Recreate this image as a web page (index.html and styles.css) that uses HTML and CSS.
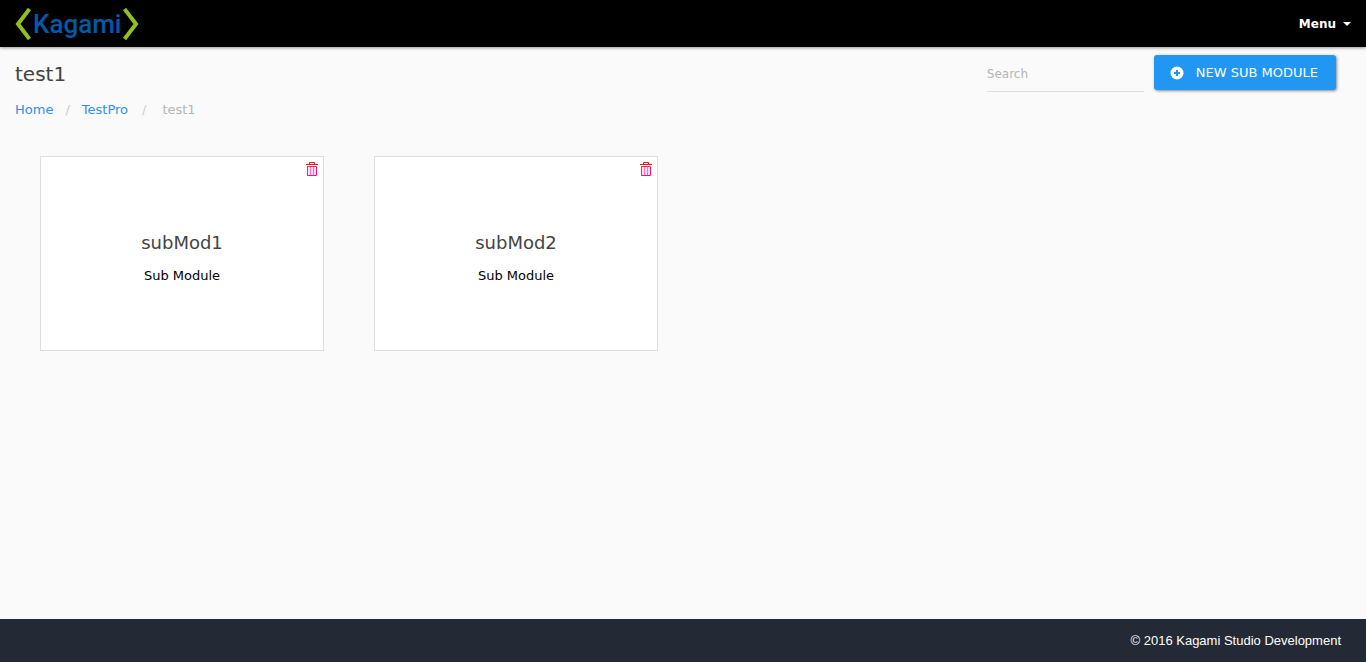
FILE: index.html
```html
<!DOCTYPE html>
<html lang="en">
<head>
<meta charset="utf-8">
<meta name="viewport" content="width=device-width, initial-scale=1">
<title>Kagami Studio</title>
<link rel="stylesheet" href="styles.css">
</head>
<body>
<header class="topbar">
  <a class="brand" href="#" aria-label="Kagami">
    <svg class="bracket" viewBox="0 0 16 32" aria-hidden="true"><path d="M14.500 1 3 16l11.500 15"/></svg>
    <span class="brand-name">Kagami</span>
    <svg class="bracket" viewBox="0 0 16 32" aria-hidden="true"><path d="M1.500 1 13 16 1.500 31"/></svg>
  </a>
  <button class="menu" type="button">Menu<span class="caret"></span></button>
</header>
<main class="page">
  <div class="page-head">
    <div class="titles">
      <h1 class="title">test1</h1>
      <nav aria-label="Breadcrumb">
        <ol class="breadcrumb">
          <li><a href="#">Home</a></li>
          <li><a href="#">TestPro</a></li>
          <li class="current">test1</li>
        </ol>
      </nav>
    </div>
    <div class="actions">
      <input class="search" type="text" placeholder="Search" aria-label="Search">
      <button class="new-button" type="button">
        <svg class="plus" viewBox="0 0 14 14" aria-hidden="true"><circle cx="7" cy="7" r="6.500" fill="#fff"/><path d="M7 4v6M4 7h6" stroke="#2196f3" stroke-width="2"/></svg>
        <span>NEW SUB MODULE</span>
      </button>
    </div>
  </div>
  <div class="cards">
    <article class="card">
      <button class="delete" type="button" aria-label="Delete subMod1">
        <svg class="trash" viewBox="0 0 12 14" aria-hidden="true"><path class="bin" d="M1.500 4.500v9h9v-9z"/><path class="ribs" d="M4.500 5v8M7.500 5v8"/><path class="side" d="M1.500 14V4.500H10"/><path class="lid" d="M0 2.500h12M3.500 2V.5h5V2"/></svg>
      </button>
      <h2 class="card-title">subMod1</h2>
      <p class="card-text">Sub Module</p>
    </article>
    <article class="card">
      <button class="delete" type="button" aria-label="Delete subMod2">
        <svg class="trash" viewBox="0 0 12 14" aria-hidden="true"><path class="bin" d="M1.500 4.500v9h9v-9z"/><path class="ribs" d="M4.500 5v8M7.500 5v8"/><path class="side" d="M1.500 14V4.500H10"/><path class="lid" d="M0 2.500h12M3.500 2V.5h5V2"/></svg>
      </button>
      <h2 class="card-title">subMod2</h2>
      <p class="card-text">Sub Module</p>
    </article>
  </div>
</main>
<footer class="footer">© 2016 Kagami Studio Development</footer>
</body>
</html>
```
FILE: styles.css
```css
* { box-sizing: border-box; }
body {
  margin: 0;
  min-height: 100vh;
  display: flex;
  flex-direction: column;
  background: #fafafa;
  color: #000;
  font: 13px/20px Verdana, "DejaVu Sans", sans-serif;
}
h1, h2, p, ol { margin: 0; padding: 0; font-weight: 400; }
button, input { font: inherit; border: 0; background: none; padding: 0; }
button { cursor: pointer; }
a { color: #2f8ff0; text-decoration: none; }
.topbar {
  display: flex;
  align-items: center;
  justify-content: space-between;
  height: 47px;
  padding: 0 15px;
  background: #000;
  box-shadow: 0 1px 3px rgba(0, 0, 0, .4);
}
.brand { display: flex; align-items: center; gap: 2px; }
.bracket { width: 16px; height: 32px; fill: none; stroke: #93c01f; stroke-width: 4; }
.brand-name { color: #0059a9; font: 500 26px/32px Roboto, sans-serif; }
.menu { display: flex; align-items: center; gap: 7px; color: #fff; font-weight: 700; font-size: 12px; }
.caret { border: 4px solid transparent; border-top-color: #fff; border-bottom: 0; }
.page { flex: 1; padding: 8px 15px; }
.page-head { display: flex; justify-content: space-between; }
.title { margin-top: 6px; color: #444; font-size: 20px; line-height: 26px; }
.breadcrumb { display: flex; margin-top: 12px; padding-top: 1px; list-style: none; color: #b5b5b5; }
.breadcrumb li + li::before { content: "/"; padding: 0 12px; color: #ccc; }
.breadcrumb .current::before { padding: 0 16px 0 14px; }
.actions { display: flex; align-items: flex-start; gap: 10px; padding-right: 15px; }
.search { width: 157px; height: 37px; padding-top: 1px; border-bottom: 1px solid #ddd; outline: 0; font-size: 12px; }
.search::placeholder { color: #b5b5b5; opacity: 1; }
.new-button {
  display: flex;
  align-items: center;
  gap: 12px;
  height: 35px;
  padding: 0 18px 0 16px;
  border-radius: 3px;
  background: #2196f3;
  color: #fff;
  box-shadow: 1px 1px 3px rgba(0, 0, 0, .45);
}
.plus { width: 14px; height: 14px; }
.cards { display: grid; grid-template-columns: repeat(4, 1fr); gap: 50px; padding: 36px 25px; }
.card {
  position: relative;
  height: 195px;
  padding-top: 73px;
  border: 1px solid #ddd;
  background: #fff;
  text-align: center;
}
.card-title { color: #444; font-size: 18px; line-height: 26px; }
.card-text { margin-top: 10px; }
.delete { position: absolute; top: 5px; right: 5px; display: flex; }
.trash { width: 12px; height: 14px; fill: none; }
.bin { fill: #ffe0f2; stroke: #f0148c; }
.ribs { stroke: #ff70c0; }
.side { stroke: #ff3030; }
.lid { stroke: #f80c18; }
.footer {
  padding: 12px 25px 11px;
  background: #242a35;
  color: #fff;
  font-family: "Liberation Sans", Arial, sans-serif;
  text-align: right;
}
```
